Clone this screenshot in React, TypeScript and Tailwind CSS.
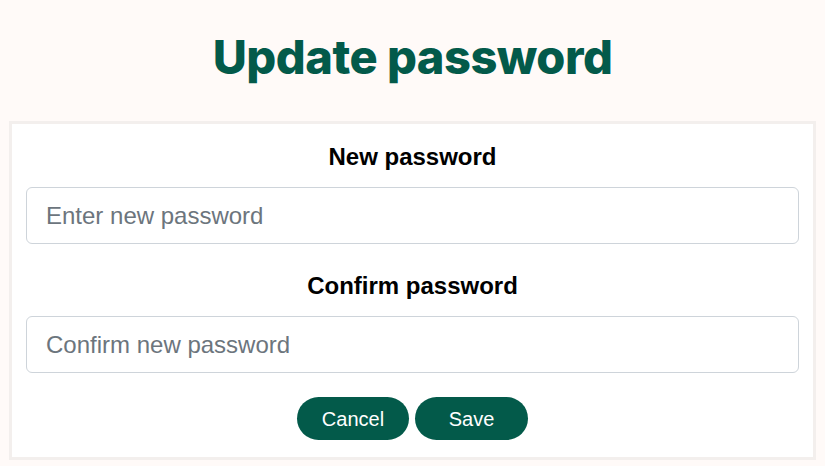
export default function App() {
  return (
    <div className="min-h-[466px] w-full bg-[#fffaf8] font-['Liberation_Sans',Arial,sans-serif]">
      <div className="flex h-[121px] items-center justify-center pb-[6px]">
        <h1 className="font-['Inter',sans-serif] text-[47px] font-extrabold tracking-[-0.5px] text-[#035a4a]">
          Update password
        </h1>
      </div>
      <form className="mx-[9px] flex flex-col border-[3px] border-[#f3efed] bg-white px-[14px] pt-[20px] pb-[17px]">
        <label className="text-center text-[24px] font-bold leading-[26px] text-black">New password</label>
        <input
          type="password"
          placeholder="Enter new password"
          className="mt-[17px] h-[57px] rounded-[6px] border border-[#ced4da] bg-white px-[19px] text-[24px] text-[#212529] placeholder:text-[#6c757d] outline-none"
        />
        <label className="mt-[29px] text-center text-[24px] font-bold leading-[26px] text-black">Confirm password</label>
        <input
          type="password"
          placeholder="Confirm new password"
          className="mt-[17px] h-[57px] rounded-[6px] border border-[#ced4da] bg-white px-[19px] text-[24px] text-[#212529] placeholder:text-[#6c757d] outline-none"
        />
        <div className="mt-[24px] flex justify-center gap-[6px]">
          <button type="button" className="h-[43px] w-[112px] rounded-full bg-[#035a4a] text-[20px] text-white">
            Cancel
          </button>
          <button type="submit" className="h-[43px] w-[113px] rounded-full bg-[#035a4a] text-[20px] text-white">
            Save
          </button>
        </div>
      </form>
    </div>
  );
}
